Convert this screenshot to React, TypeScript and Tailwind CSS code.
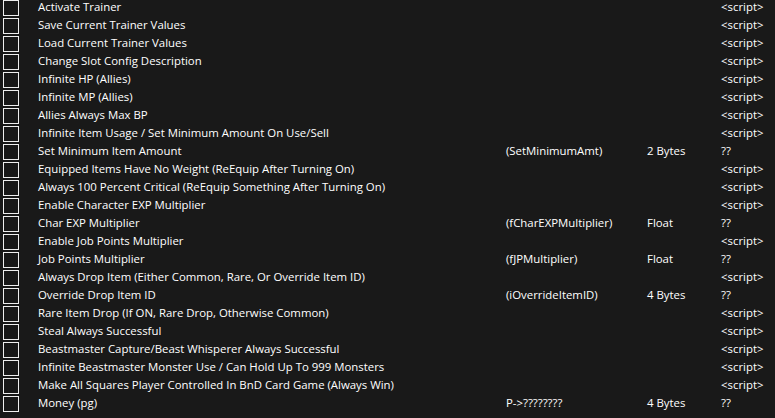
type Row = { desc: string; addr?: string; type?: string; value: string }

const rows: Row[] = [
  { desc: 'Activate Trainer', value: '<script>' },
  { desc: 'Save Current Trainer Values', value: '<script>' },
  { desc: 'Load Current Trainer Values', value: '<script>' },
  { desc: 'Change Slot Config Description', value: '<script>' },
  { desc: 'Infinite HP (Allies)', value: '<script>' },
  { desc: 'Infinite MP (Allies)', value: '<script>' },
  { desc: 'Allies Always Max BP', value: '<script>' },
  { desc: 'Infinite Item Usage / Set Minimum Amount On Use/Sell', value: '<script>' },
  { desc: 'Set Minimum Item Amount', addr: '(SetMinimumAmt)', type: '2 Bytes', value: '??' },
  { desc: 'Equipped Items Have No Weight (ReEquip After Turning On)', value: '<script>' },
  { desc: 'Always 100 Percent Critical (ReEquip Something After Turning On)', value: '<script>' },
  { desc: 'Enable Character EXP Multiplier', value: '<script>' },
  { desc: 'Char EXP Multiplier', addr: '(fCharEXPMultiplier)', type: 'Float', value: '??' },
  { desc: 'Enable Job Points Multiplier', value: '<script>' },
  { desc: 'Job Points Multiplier', addr: '(fJPMultiplier)', type: 'Float', value: '??' },
  { desc: 'Always Drop Item (Either Common, Rare, Or Override Item ID)', value: '<script>' },
  { desc: 'Override Drop Item ID', addr: '(iOverrideItemID)', type: '4 Bytes', value: '??' },
  { desc: 'Rare Item Drop (If ON, Rare Drop, Otherwise Common)', value: '<script>' },
  { desc: 'Steal Always Successful', value: '<script>' },
  { desc: 'Beastmaster Capture/Beast Whisperer Always Successful', value: '<script>' },
  { desc: 'Infinite Beastmaster Monster Use / Can Hold Up To 999 Monsters', value: '<script>' },
  { desc: 'Make All Squares Player Controlled In BnD Card Game (Always Win)', value: '<script>' },
  { desc: 'Money (pg)', addr: 'P->????????', type: '4 Bytes', value: '??' },
]

export default function App() {
  return (
    <div className="w-[775px] h-[418px] overflow-hidden bg-[#191919] text-white text-[11.4px] leading-[16px] font-['Open_Sans',sans-serif]">
      <div className="-mt-px flex flex-col">
        {rows.map((r, i) => (
          <div key={i} className="grid grid-cols-[38px_468px_141px_74px_1fr] h-[18px] items-center whitespace-nowrap">
            <div className="pl-[3px] flex items-center">
              <span className="block w-[16px] h-[16px] border border-[#f0f0f0]" />
            </div>
            <div className="mb-[2px]">{r.desc}</div>
            <div className="mb-[2px]">{r.addr}</div>
            <div className="mb-[2px]">{r.type}</div>
            <div className="mb-[2px]">{r.value}</div>
          </div>
        ))}
      </div>
    </div>
  )
}
